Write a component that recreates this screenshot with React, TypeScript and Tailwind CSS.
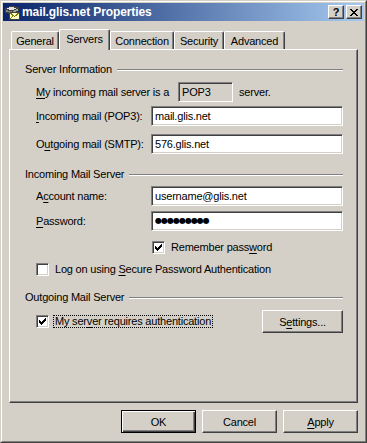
import type { ReactNode } from 'react';

// classic win2000 chrome bits
function Edit({ value, readOnly = false, className = '' }: { value: ReactNode; readOnly?: boolean; className?: string }) {
  return (
    <div
      className={`h-[20px] border border-t-[#808080] border-l-[#808080] border-r-white border-b-white shadow-[inset_1px_1px_0_#404040,inset_-1px_-1px_0_#d4d0c8] pl-[3px] flex items-center whitespace-nowrap ${
        readOnly ? 'bg-[#d4d0c8]' : 'bg-white'
      } ${className}`}
    >
      {value}
    </div>
  );
}

function CheckBox({ checked = false }: { checked?: boolean }) {
  return (
    <div className="w-[13px] h-[13px] shrink-0 bg-white border border-t-[#808080] border-l-[#808080] border-r-white border-b-white shadow-[inset_1px_1px_0_#404040,inset_-1px_-1px_0_#d4d0c8] relative">
      {checked && (
        <svg width="13" height="13" viewBox="0 0 13 13" className="absolute -left-[1px] -top-[1px]" shapeRendering="crispEdges">
          <rect x="3" y="5" width="1" height="3" fill="#000" />
          <rect x="4" y="6" width="1" height="3" fill="#000" />
          <rect x="5" y="7" width="1" height="3" fill="#000" />
          <rect x="6" y="6" width="1" height="3" fill="#000" />
          <rect x="7" y="5" width="1" height="3" fill="#000" />
          <rect x="8" y="4" width="1" height="3" fill="#000" />
          <rect x="9" y="3" width="1" height="3" fill="#000" />
        </svg>
      )}
    </div>
  );
}

function Btn({ children, def = false, className = '' }: { children: ReactNode; def?: boolean; className?: string }) {
  const edge = def
    ? 'border border-black shadow-[inset_1px_1px_0_#fff,inset_-1px_-1px_0_#404040,inset_-2px_-2px_0_#808080]'
    : 'border border-t-white border-l-white border-r-[#404040] border-b-[#404040] shadow-[inset_-1px_-1px_0_#808080]';
  return (
    <div className={`h-[23px] bg-[#d4d0c8] flex items-center justify-center ${edge} ${className}`}>{children}</div>
  );
}

function GroupHead({ title }: { title: string }) {
  return (
    <div className="h-[14px] flex items-center pl-[15px] pr-[14px]">
      <span className="whitespace-nowrap">{title}</span>
      <div className="ml-[5px] flex-1 h-[2px] mt-[1px] border-t border-t-[#808080] border-b border-b-white" />
    </div>
  );
}

function U({ children }: { children: ReactNode }) {
  return <span className="underline underline-offset-[2px]">{children}</span>;
}

function Tab({ label, width, active = false }: { label: string; width: string; active?: boolean }) {
  return (
    <div
      className={`${width} ${
        active ? 'h-[21px] -mb-[1px] z-10' : 'h-[18px]'
      } bg-[#d4d0c8] rounded-t-[2px] border-t border-l border-r border-t-white border-l-white border-r-[#404040] shadow-[inset_-1px_0_0_#808080] flex justify-center pt-[2px] whitespace-nowrap`}
    >
      {label}
    </div>
  );
}

function MailIcon() {
  return (
    <svg width="16" height="16" viewBox="0 0 16 16" shapeRendering="crispEdges">
      <polygon points="1,5 7,2 14,4 8,7" fill="#e0e0e0" stroke="#404040" strokeWidth="1" />
      <polygon points="1,5 8,7 8,10 1,8" fill="#808080" stroke="#404040" strokeWidth="1" />
      <polygon points="8,7 14,4 14,7 8,10" fill="#a0a0a0" stroke="#404040" strokeWidth="1" />
      <rect x="5.5" y="8.5" width="10" height="7" fill="#ffffc8" stroke="#404040" />
      <polyline points="5.5,8.5 10.5,12.5 15.5,8.5" fill="none" stroke="#808000" />
      <polyline points="5.5,15.5 9,12 M12,12 15.5,15.5" fill="none" stroke="#808000" />
    </svg>
  );
}

function TitleButton({ children }: { children: ReactNode }) {
  return (
    <div className="w-[16px] h-[14px] bg-[#d4d0c8] border border-t-white border-l-white border-r-[#404040] border-b-[#404040] shadow-[inset_-1px_-1px_0_#808080] flex items-center justify-center">
      {children}
    </div>
  );
}

export default function App() {
  return (
    <div className="w-[367px] h-[443px] bg-[#d4d0c8] border border-t-[#d4d0c8] border-l-[#d4d0c8] border-r-[#404040] border-b-[#404040] font-['Liberation_Sans',Arial,sans-serif] text-[11px] leading-[14px] tracking-[-0.2px] text-black select-none">
      <div className="h-full border border-t-white border-l-white border-r-[#808080] border-b-[#808080] p-[1px] flex flex-col">
        {/* title bar */}
        <div className="h-[18px] shrink-0 flex items-center bg-[linear-gradient(to_right,#0a246a,#a6caf0)]">
          <div className="ml-[1px]">
            <MailIcon />
          </div>
          <span className="ml-[2px] text-white font-bold text-[12px] tracking-[-0.1px]">mail.glis.net Properties</span>
          <div className="ml-auto mr-[2px] flex gap-[2px]">
            <TitleButton>
              <span className="font-bold text-[11px] leading-[11px] tracking-normal">?</span>
            </TitleButton>
            <TitleButton>
              <svg width="8" height="7" viewBox="0 0 8 7" shapeRendering="crispEdges">
                <path d="M0 0h2v1h-2zM6 0h2v1h-2zM1 1h2v1h-2zM5 1h2v1h-2zM2 2h4v1h-4zM3 3h2v1h-2zM2 4h4v1h-4zM1 5h2v1h-2zM5 5h2v1h-2zM0 6h2v1h-2zM6 6h2v1h-2z" fill="#000" />
              </svg>
            </TitleButton>
          </div>
        </div>

        {/* tabs */}
        <div className="h-[28px] shrink-0 flex items-end pl-[8px] relative z-10">
          <Tab label="General" width="w-[48px]" />
          <Tab label="Servers" width="w-[51px]" active />
          <Tab label="Connection" width="w-[64px]" />
          <Tab label="Security" width="w-[50px]" />
          <Tab label="Advanced" width="w-[61px]" />
        </div>

        {/* page */}
        <div className="mx-[6px] h-[354px] shrink-0 border border-t-white border-l-white border-r-[#404040] border-b-[#404040] shadow-[inset_-1px_-1px_0_#808080] flex flex-col">
          <div className="mt-[12px]">
            <GroupHead title="Server Information" />
          </div>
          <div className="mt-[6px] flex items-center pl-[26px]">
            <span className="w-[142px] whitespace-nowrap">
              <U>M</U>y incoming mail server is a
            </span>
            <Edit value="POP3" readOnly className="w-[55px]" />
            <span className="ml-[6px]">server.</span>
          </div>
          <div className="mt-[4px] flex items-center pl-[26px] pr-[14px]">
            <span className="w-[115px] whitespace-nowrap">
              <U>I</U>ncoming mail (POP3):
            </span>
            <Edit value="mail.glis.net" className="flex-1" />
          </div>
          <div className="mt-[8px] flex items-center pl-[26px] pr-[14px]">
            <span className="w-[115px] whitespace-nowrap">
              O<U>u</U>tgoing mail (SMTP):
            </span>
            <Edit value="576.glis.net" className="flex-1" />
          </div>

          <div className="mt-[13px]">
            <GroupHead title="Incoming Mail Server" />
          </div>
          <div className="mt-[5px] flex items-center pl-[26px] pr-[14px]">
            <span className="w-[115px] whitespace-nowrap">
              A<U>c</U>count name:
            </span>
            <Edit value="username@glis.net" className="flex-1" />
          </div>
          <div className="mt-[5px] flex items-center pl-[26px] pr-[14px]">
            <span className="w-[115px] whitespace-nowrap">
              <U>P</U>assword:
            </span>
            <Edit
              value={<span className="font-['DejaVu_Sans',sans-serif] text-[8px] tracking-[-1px]">●●●●●●●●●</span>}
              className="flex-1"
            />
          </div>
          <div className="mt-[9px] flex items-center pl-[142px]">
            <CheckBox checked />
            <span className="ml-[6px] whitespace-nowrap">
              Remember pass<U>w</U>ord
            </span>
          </div>
          <div className="mt-[8px] flex items-center pl-[26px]">
            <CheckBox />
            <span className="ml-[6px] whitespace-nowrap">
              Log on using <U>S</U>ecure Password Authentication
            </span>
          </div>

          <div className="mt-[14px]">
            <GroupHead title="Outgoing Mail Server" />
          </div>
          <div className="mt-[6px] h-[23px] flex items-center pl-[26px] pr-[14px]">
            <CheckBox checked />
            <span className="ml-[4px] px-[1px] h-[13px] leading-[11px] border border-dotted border-black whitespace-nowrap">
              My ser<U>v</U>er requires authentication
            </span>
            <Btn className="ml-auto w-[81px]">
              S<U>e</U>ttings...
            </Btn>
          </div>
        </div>

        {/* dialog buttons */}
        <div className="mt-[7px] flex justify-end gap-[6px] pr-[6px]">
          <Btn def className="w-[75px]">
            OK
          </Btn>
          <Btn className="w-[75px]">Cancel</Btn>
          <Btn className="w-[75px]">
            <U>A</U>pply
          </Btn>
        </div>
      </div>
    </div>
  );
}
